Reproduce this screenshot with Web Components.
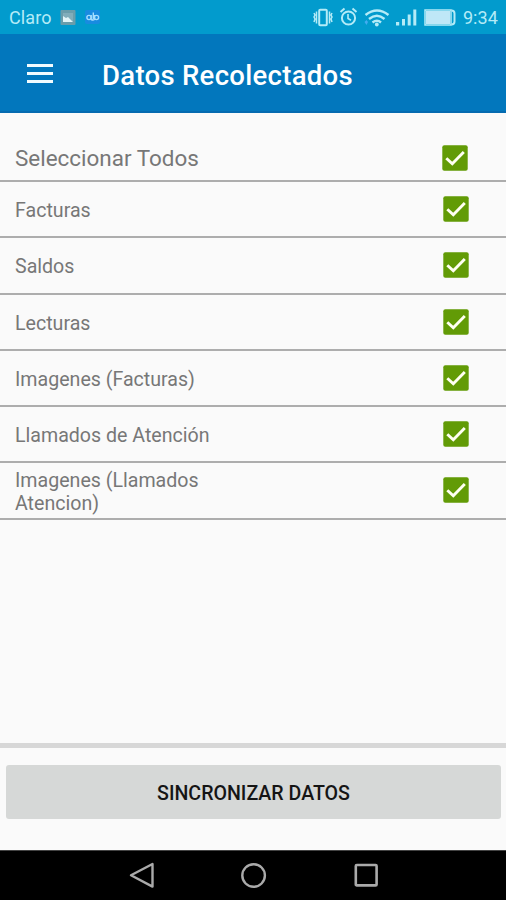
<!DOCTYPE html>
<html lang="es">
<head>
<meta charset="utf-8">
<title>Datos Recolectados</title>
<style>
  body { margin: 0; background: #fafafa; font-family: Roboto, "Liberation Sans", sans-serif; }
</style>
</head>
<body>
<collect-screen></collect-screen>
<script>
const define = (name, html) => customElements.define(name, class extends HTMLElement {
  constructor() {
    super();
    this.attachShadow({ mode: 'open' }).innerHTML = html;
  }
});

define('status-bar', `
  <style>
    :host { display: flex; box-sizing: border-box; height: 34px; padding: 0 8px 0 9px; align-items: center;
      justify-content: space-between; background: #029bcd; color: #b4ebf7; }
    .group { display: flex; align-items: center; height: 34px; }
    .carrier { font-size: 18px; line-height: 34px; width: 51px; letter-spacing: .1px; padding-top: 1px; }
    .time { font-size: 18px; line-height: 34px; margin-left: 6px; letter-spacing: .1px; padding-top: 2px; }
    svg { display: block; }
  </style>
  <div class="group">
    <span class="carrier"><slot name="carrier"></slot></span>
    <svg width="46" height="34" viewBox="60 0 46 34">
      <rect x="60.500" y="10" width="15" height="15" rx="1" fill="#6a9dab"/>
      <path d="M63 13h10v9H63z" fill="#81adba"/>
      <path d="M63 22v-6l3 2 2-1 5 5z" fill="#e2f4f7"/>
      <rect x="85" y="10" width="15" height="14" rx="2" fill="#188be0"/>
      <g fill="none" stroke="#a5ddff" stroke-width="1.400">
        <circle cx="89" cy="17.500" r="2.100"/><circle cx="96.500" cy="17.500" r="2.100"/>
        <path d="M91.200 15v4.500q2 1 3.200 0M93.300 12.500v6.500M94.500 15v5"/>
      </g>
    </svg>
  </div>
  <div class="group">
    <svg width="146" height="34" viewBox="311 0 146 34" fill="none" stroke="#b4ebf7">
      <rect x="319.200" y="9.700" width="7.600" height="15.600" rx="1" stroke-width="2"/>
      <path d="M316.500 11.500v12M329.500 11.500v12M314 13l1 2-1 2 1 2-1 3M332 13l-1 2 1 2-1 2 1 3" stroke-width="1.500"/>
      <circle cx="348.500" cy="18" r="6.600" stroke-width="2"/>
      <path d="M348 14v4.500l3 1.800" stroke-width="1.600"/>
      <path d="M340.500 12l4-3.500M352.500 8.500l4 3.500" stroke-width="2"/>
      <g stroke-width="2.400">
        <path d="M365.500 15q11.500-9 23 0M369 19q8-6.500 15.500 0M372.500 22.500q4.500-3.500 8.500 0"/>
      </g>
      <circle cx="376.800" cy="24.500" r="1.900" fill="#b4ebf7" stroke="none"/>
      <path d="M364.500 22l2-2 1.500 2-1.500 3z" fill="#43acf0" stroke="none"/>
      <g fill="#b4ebf7" stroke="none">
        <rect x="396" y="22" width="3.200" height="3.500"/><rect x="402" y="19" width="3" height="6.500"/>
        <rect x="407.700" y="14.500" width="3" height="11"/><rect x="413.300" y="9.500" width="3" height="16"/>
      </g>
      <path d="M425 10h26v15h-26z" stroke-width="1.500"/>
      <rect x="426" y="11" width="24" height="13" fill="#bfe7f7" stroke="none"/>
      <path d="M451.500 10.500q3 0 3 3v8q0 3-3 3" stroke-width="2"/>
    </svg>
    <span class="time"><slot name="time"></slot></span>
  </div>`);

define('app-bar', `
  <style>
    :host { display: flex; box-sizing: border-box; height: 79px; padding: 0 27px 0; align-items: center;
      background: #0277bd; border-bottom: 2px solid #056bb0; color: #fff; }
    .menu { display: grid; gap: 5px; width: 26px; margin-top: 2px; }
    .menu i { height: 3px; background: #f1fbff; }
    h1 { margin: 7px 0 0 49px; font-size: 27.500px; line-height: 36px; font-weight: 500; white-space: nowrap; letter-spacing: .3px; }
  </style>
  <div class="menu"><i></i><i></i><i></i></div>
  <h1><slot></slot></h1>`);

define('check-box', `
  <style>:host { display: block; width: 26px; height: 26px; } svg { display: block; }</style>
  <svg width="26" height="26" viewBox="0 0 26 26">
    <rect x=".300" y=".300" width="25.400" height="25.400" rx="2" fill="#629b06"/>
    <path d="M4.300 13.200l6 5.600L21.800 7" fill="none" stroke="#fffff2" stroke-width="2.900"/>
  </svg>`);

define('data-row', `
  <style>
    :host { display: flex; box-sizing: border-box; height: 56.250px; padding: 0 37px 0 15px; align-items: center;
      justify-content: space-between; border-bottom: 2px solid #adadad; color: #777; font-size: 19.600px; line-height: 23px; }
    :host([main]) { height: 69px; padding: 23px 38px 0 15px; font-size: 22.450px; }
    .label { width: 205px; padding-top: 3px; }
    :host([main]) .label { padding-top: 0; }
  </style>
  <span class="label"><slot></slot></span><check-box></check-box>`);

define('action-bar', `
  <style>
    :host { display: block; box-sizing: border-box; height: 107px; border-top: 5px solid #d7d7d7; padding: 17px 5px 0 6px; }
    button { display: block; width: 100%; height: 54px; padding: 4px 0 0; border: 0; border-radius: 3px; background: #d6d8d7;
      color: #151515; font: 500 19.600px/24px Roboto, "Liberation Sans", sans-serif; }
  </style>
  <button><slot></slot></button>`);

define('nav-bar', `
  <style>
    :host { display: flex; box-sizing: border-box; height: 50px; background: #000; border-top: 1px solid #444;
      justify-content: center; gap: 84px; padding: 10px 0 0 1px; }
    svg { display: block; }
  </style>
  <svg width="28" height="28" viewBox="0 0 28 28" fill="none" stroke="#aaa" stroke-width="2.400" stroke-linejoin="round"><path d="M3 14.300L24.500 3v22.600z"/></svg>
  <svg width="28" height="28" viewBox="0 0 28 28" fill="none" stroke="#aaa" stroke-width="2.400"><circle cx="13.600" cy="14.500" r="11.300"/></svg>
  <svg width="28" height="28" viewBox="0 0 28 28" fill="none" stroke="#aaa" stroke-width="2.600"><rect x="3.800" y="4" width="20.800" height="20.400" rx="1"/></svg>`);

define('collect-screen', `
  <style>
    :host { display: flex; flex-direction: column; width: 506px; height: 900px; background: #fafafa; overflow: hidden; }
    main { flex: 1; }
  </style>
  <status-bar><span slot="carrier">Claro</span><span slot="time">9:34</span></status-bar>
  <app-bar>Datos Recolectados</app-bar>
  <main>
    <data-row main>Seleccionar Todos</data-row>
    <data-row>Facturas</data-row>
    <data-row>Saldos</data-row>
    <data-row>Lecturas</data-row>
    <data-row>Imagenes (Facturas)</data-row>
    <data-row>Llamados de Atención</data-row>
    <data-row>Imagenes (Llamados Atencion)</data-row>
  </main>
  <action-bar>SINCRONIZAR DATOS</action-bar>
  <nav-bar></nav-bar>`);
</script>
</body>
</html>
